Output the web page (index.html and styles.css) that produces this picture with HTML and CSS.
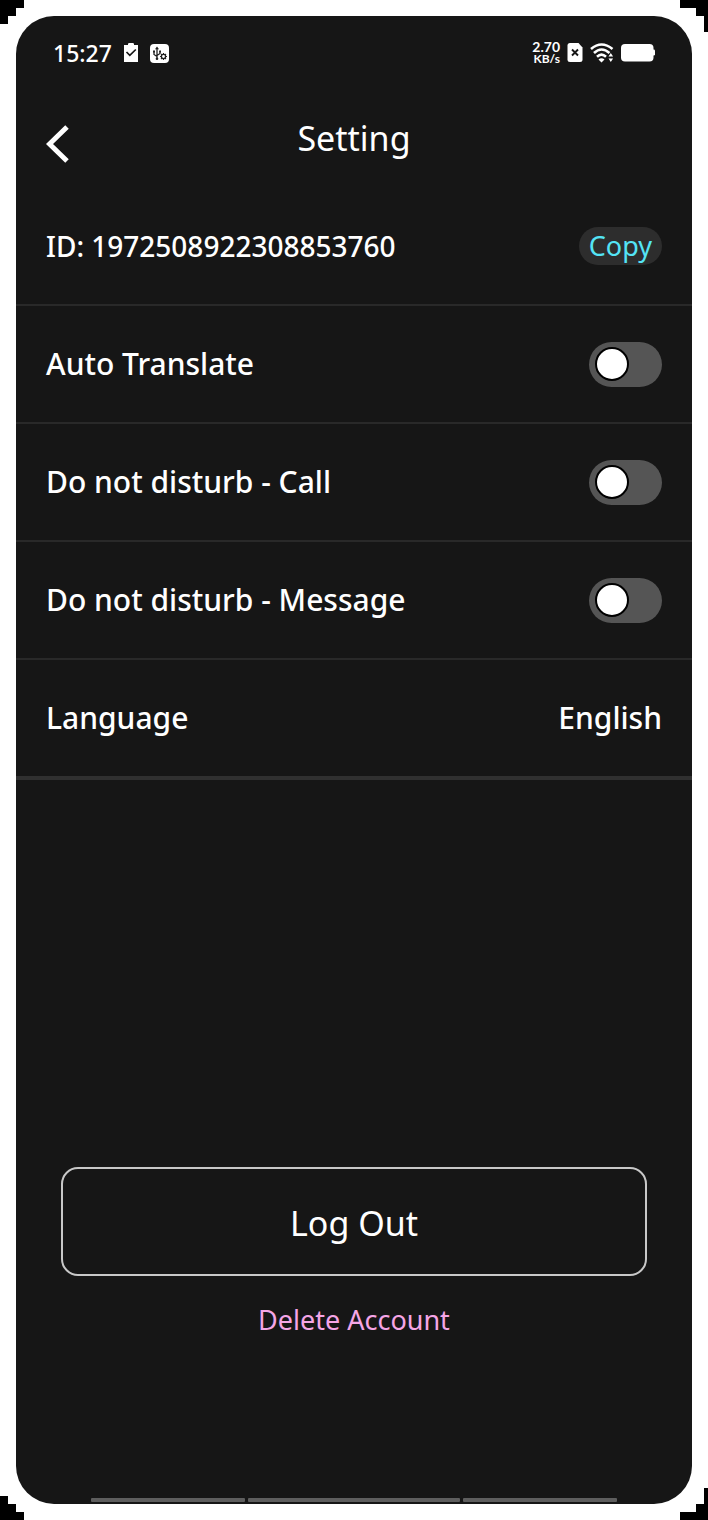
FILE: index.html
```html
<!DOCTYPE html>
<html lang="en">
<head>
<meta charset="utf-8">
<meta name="viewport" content="width=device-width, initial-scale=1">
<title>Setting</title>
<link rel="stylesheet" href="styles.css">
</head>
<body>
<svg class="corner corner-tl" viewBox="0 0 28 32" aria-hidden="true"><path d="M0 0h24v8h-8v8h-8v8h-8z"/></svg>
<svg class="corner corner-tr" viewBox="0 0 28 32" aria-hidden="true"><path d="M0 0h28v32h-4v-16h-8v-8h-16z"/></svg>
<svg class="corner corner-bl" viewBox="0 0 28 32" aria-hidden="true"><path d="M0 32h24v-8h-8v-8h-8v-8h-8z"/></svg>
<svg class="corner corner-br" viewBox="0 0 28 32" aria-hidden="true"><path d="M0 32h28v-32h-4v16h-8v8h-16z"/></svg>
<div class="screen">
  <div class="status">
    <div class="status-group status-left">
      <span class="time">15:27</span>
      <svg width="14" height="20" viewBox="0 0 14 20" aria-hidden="true">
        <path fill="#fff" d="M0 2h4V1.200Q4 0 5.200 0H8.800Q10 0 10 1.200V2h4v17H0z"/>
        <path fill="none" stroke="#161616" stroke-width="1.700" d="M2.500 9l3.300 3.300 6-5.800"/>
      </svg>
      <svg width="19" height="19" viewBox="0 0 19 19" aria-hidden="true">
        <rect width="19" height="19" rx="4" fill="#fff"/>
        <g fill="none" stroke="#222" stroke-width="1.300">
          <path d="M7 15V4M7 12.500L4 10.500V7M7 11.500L10 9.500V7"/>
          <circle cx="13.500" cy="12.500" r="2.100"/>
          <path stroke-width="1.200" d="M13.500 9v1.300M13.500 14.700V16M10 12.500h1.300M15.700 12.500H17M11 10l.9.9M15.100 14.100l.9.900M16 10l-.9.900M11.900 14.100l-.9.900"/>
        </g>
        <path fill="#222" d="M5 5.300L7 2.500l2 2.800zM3 6.500h2v2H3zM9.200 6.500h1.800v2H9.200z"/>
        <circle cx="7" cy="14.800" r="1.300" fill="#222"/>
      </svg>
    </div>
    <div class="status-group status-right">
      <span class="speed"><span class="speed-value">2.70</span><span>KB/s</span></span>
      <svg width="16" height="20" viewBox="0 0 16 20" aria-hidden="true">
        <path fill="#fff" d="M3 0h8.500L15.500 4.500V16.500q0 2.500-2.500 2.500H3Q.5 19 .5 16.500V2.500Q.5 0 3 0z"/>
        <path stroke="#161616" stroke-width="1.900" d="M5 6.500l6 6M11 6.500l-6 6"/>
      </svg>
      <svg width="24" height="20" viewBox="0 0 24 20" aria-hidden="true">
        <g fill="none" stroke="#fff" stroke-width="2.600">
          <path d="M1 6Q11.500-3 22.500 6"/>
          <path d="M4 10Q11.500 3 19.500 10"/>
          <path d="M7 13.700Q11.500 9.500 16 13.700"/>
        </g>
        <path fill="#fff" d="M8.500 16.500q3-2.500 6 0l-3 3zM18.500 13.500l2.300-3.500 2.300 3.500zM18.500 15.500h4.600L20.800 19z"/>
      </svg>
      <svg width="34" height="18" viewBox="0 0 34 18" aria-hidden="true">
        <rect width="32.500" height="17.500" rx="4" fill="#fff"/>
        <rect x="31" y="5.500" width="3" height="6" rx="1.300" fill="#fff"/>
      </svg>
    </div>
  </div>
  <header class="header">
    <button class="back" type="button" aria-label="Back">
      <svg width="24" height="40" viewBox="0 0 24 40" aria-hidden="true"><path fill="none" stroke="#fff" stroke-width="5" d="M21 3L3.500 20 21 37"/></svg>
    </button>
    <h1 class="title">Setting</h1>
  </header>
  <main class="list">
    <div class="row"><span class="id">ID: 1972508922308853760</span><button class="copy" type="button">Copy</button></div>
    <div class="row"><label for="translate">Auto Translate</label><input class="switch" id="translate" type="checkbox" role="switch"></div>
    <div class="row"><label for="dnd-call">Do not disturb - Call</label><input class="switch" id="dnd-call" type="checkbox" role="switch"></div>
    <div class="row"><label for="dnd-message">Do not disturb - Message</label><input class="switch" id="dnd-message" type="checkbox" role="switch"></div>
    <div class="row row-last"><span>Language</span><span>English</span></div>
  </main>
  <div class="actions">
    <button class="logout" type="button">Log Out</button>
    <button class="delete" type="button">Delete Account</button>
  </div>
  <div class="navbar"><span></span><span></span><span></span></div>
</div>
</body>
</html>
```

FILE: styles.css
```css
*, *::before { box-sizing: border-box; }

body {
  margin: 0;
  padding: 16px;
  background: #fff;
  color: #fff;
  font-family: "Noto Sans", "Open Sans", sans-serif;
  position: relative;
}

button {
  border: 0;
  padding: 0;
  background: none;
  color: inherit;
  font: inherit;
  cursor: pointer;
}

svg { display: block; flex: none; }

.corner { position: absolute; width: 28px; height: 32px; }
.corner-tl { top: 0; left: 0; }
.corner-tr { top: 0; right: 0; }
.corner-bl { bottom: 0; left: 0; }
.corner-br { bottom: 0; right: 0; }

.screen {
  display: flex;
  flex-direction: column;
  min-height: calc(100vh - 32px);
  background: #161616;
  border-radius: 38px;
  overflow: hidden;
}

.status {
  display: flex;
  justify-content: space-between;
  align-items: center;
  height: 72px;
  padding: 2px 37px 0;
}
.status-group { display: flex; align-items: center; }
.status-left { gap: 12px; }
.status-right { gap: 7px; }
.time { font-size: 23px; line-height: 24px; font-weight: 500; }
.speed {
  display: flex;
  flex-direction: column;
  align-items: flex-end;
  font-family: Lato, "Noto Sans", sans-serif;
  font-size: 12px;
  line-height: 12px;
  font-weight: 700;
}
.speed-value { font-size: 14px; }

.header {
  display: grid;
  grid-template-columns: 40px 1fr 40px;
  align-items: center;
  height: 100px;
  padding: 0 30px;
}
.back { justify-self: start; padding-top: 12px; }
.title {
  margin: 0;
  text-align: center;
  font-size: 34px;
  line-height: 40px;
  font-weight: 400;
}

.row {
  display: flex;
  justify-content: space-between;
  align-items: center;
  min-height: 118px;
  padding: 0 30px;
  border-bottom: 2px solid #292929;
  font-size: 30px;
  line-height: 40px;
  font-weight: 500;
}
.row-last { min-height: 120px; border-bottom: 4px solid #303030; }
.id { font-size: 28px; }

.copy {
  padding: 0 10px;
  border-radius: 19px;
  background: #2d2d2d;
  color: #54e4f5;
  font-size: 27px;
  line-height: 38px;
  font-weight: 400;
}

.switch {
  appearance: none;
  display: flex;
  align-items: center;
  width: 73px;
  height: 45px;
  margin: 0;
  padding: 0 6px;
  border-radius: 23px;
  background: #555;
  cursor: pointer;
}
.switch::before {
  content: "";
  width: 34px;
  height: 34px;
  border: 2px solid #000;
  border-radius: 50%;
  background: #fff;
}
.switch:checked { justify-content: flex-end; background: #54e4f5; }

.actions {
  display: flex;
  flex-direction: column;
  align-items: center;
  gap: 20px;
  margin-top: auto;
  padding: 32px 45px 154px;
}
.logout {
  width: 100%;
  padding: 34px 0 30px;
  border: 2px solid #c8c8c8;
  border-radius: 17px;
  font-size: 34px;
  line-height: 41px;
}
.delete { color: #f5a5e6; font-size: 27px; line-height: 48px; }

.navbar {
  display: grid;
  grid-template-columns: 154fr 212fr 154fr;
  gap: 3px;
  padding: 0 75px 2px;
}
.navbar span { height: 4px; border-radius: 1px; background: #5e5e5e; }
```
